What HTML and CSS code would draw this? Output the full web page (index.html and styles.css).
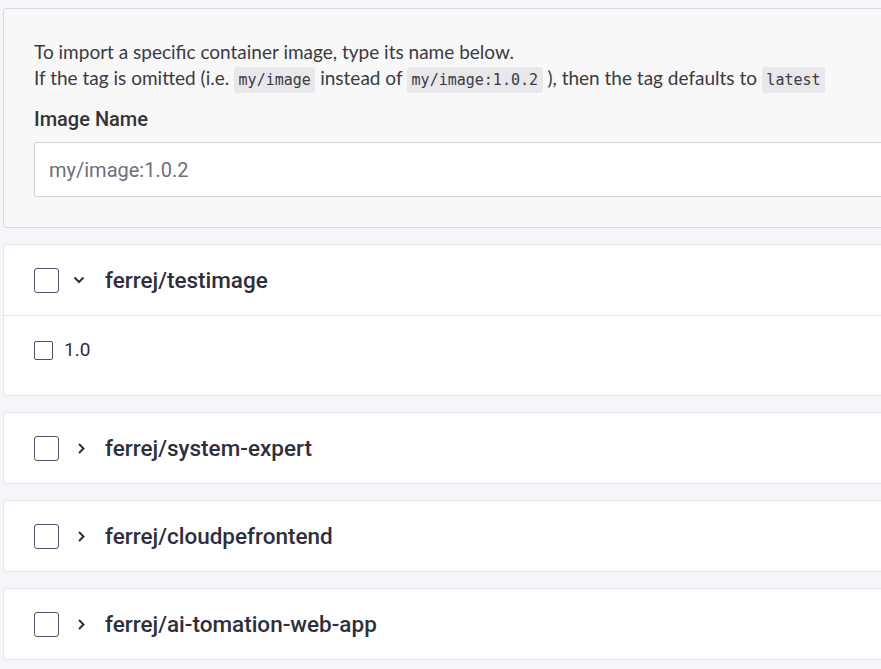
FILE: index.html
```html
<!DOCTYPE html>
<html lang="en">
<head>
<meta charset="utf-8">
<title>Import image</title>
<link rel="stylesheet" href="styles.css">
</head>
<body>
<div class="page">
  <section class="import-box">
    <p class="intro">To import a specific container image, type its name below.<br>If the tag is omitted (i.e. <code>my/image</code> instead of <code>my/image:1.0.2</code> ), then the tag defaults to <code>latest</code></p>
    <label class="field-label" for="img">Image Name</label>
    <input id="img" class="field-input" type="text" placeholder="my/image:1.0.2">
  </section>

  <section class="card">
    <div class="card-head">
      <span class="check"></span>
      <svg class="chev" width="12" height="14" viewBox="0 0 12 14"><polyline points="1.5,4.5 6,9 10.5,4.5" fill="none" stroke="#2f2f3f" stroke-width="2"/></svg>
      <span class="repo">ferrej/testimage</span>
    </div>
    <div class="card-body">
      <span class="check small"></span>
      <span class="tag">1.0</span>
    </div>
  </section>

  <section class="card">
    <div class="card-head">
      <span class="check"></span>
      <svg class="chev" width="12" height="14" viewBox="0 0 12 14"><polyline points="6,3 10.5,7.5 6,12" fill="none" stroke="#2f2f3f" stroke-width="2"/></svg>
      <span class="repo">ferrej/system-expert</span>
    </div>
  </section>

  <section class="card">
    <div class="card-head">
      <span class="check"></span>
      <svg class="chev" width="12" height="14" viewBox="0 0 12 14"><polyline points="6,3 10.5,7.5 6,12" fill="none" stroke="#2f2f3f" stroke-width="2"/></svg>
      <span class="repo">ferrej/cloudpefrontend</span>
    </div>
  </section>

  <section class="card">
    <div class="card-head">
      <span class="check"></span>
      <svg class="chev" width="12" height="14" viewBox="0 0 12 14"><polyline points="6,3 10.5,7.5 6,12" fill="none" stroke="#2f2f3f" stroke-width="2"/></svg>
      <span class="repo">ferrej/ai-tomation-web-app</span>
    </div>
  </section>
</div>
</body>
</html>
```
FILE: styles.css
```css
html, body {
  margin: 0;
  overflow: hidden;
}
body {
  background: #f4f6fa;
  font-family: Roboto, "Liberation Sans", sans-serif;
  color: #2e2e3c;
}
.page {
  width: 940px;
  padding: 8px 0 0 3px;
  display: flex;
  flex-direction: column;
  gap: 16px;
}
.import-box {
  background: #f8f8f8;
  border: 1px solid #d8d8de;
  border-radius: 3px;
  padding: 30px 30px 30px 30px;
  display: flex;
  flex-direction: column;
}
.intro {
  margin: 0;
  font-family: Lato, "Open Sans", sans-serif;
  font-size: 19px;
  line-height: 26px;
  color: #3a3a44;
}
.intro code {
  font-family: "DejaVu Sans Mono", monospace;
  font-size: 15px;
  line-height: 1;
  background: #e8e8ea;
  border-radius: 3px;
  padding: 4px 4.5px;
  color: #3a3a44;
}
.field-label {
  margin-top: 16px;
  font-size: 20px;
  font-weight: 500;
  line-height: 24px;
  color: #333338;
}
.field-input {
  margin-top: 11px;
  height: 55px;
  box-sizing: border-box;
  border: 1px solid #cfcfd6;
  border-radius: 2px;
  background: #fff;
  padding: 0 14px;
  font-family: Roboto, sans-serif;
  font-size: 20px;
  color: #333;
  outline: none;
}
.field-input::placeholder {
  color: #6e6e7c;
}
.card {
  background: #fff;
  border: 1px solid #e3e6eb;
  border-radius: 4px;
}
.card-head {
  height: 70px;
  display: flex;
  align-items: center;
  padding: 0 30px;
}
.check {
  width: 25px;
  height: 25px;
  box-sizing: border-box;
  border: 1.5px solid #4f4f6e;
  border-radius: 3px;
  background: #fff;
  flex: none;
}
.check.small {
  width: 19px;
  height: 19px;
  border-radius: 2px;
}
.chev {
  margin-left: 14px;
  flex: none;
}
.repo {
  margin-left: 20px;
  font-size: 22.5px;
  font-weight: 500;
  color: #2e2e3c;
}
.card-body {
  border-top: 1px solid #e3e6eb;
  padding: 24px 30px 35px;
  display: flex;
  align-items: center;
  gap: 11px;
}
.tag {
  font-size: 19px;
  line-height: 20px;
  color: #2e2e3c;
}
```
